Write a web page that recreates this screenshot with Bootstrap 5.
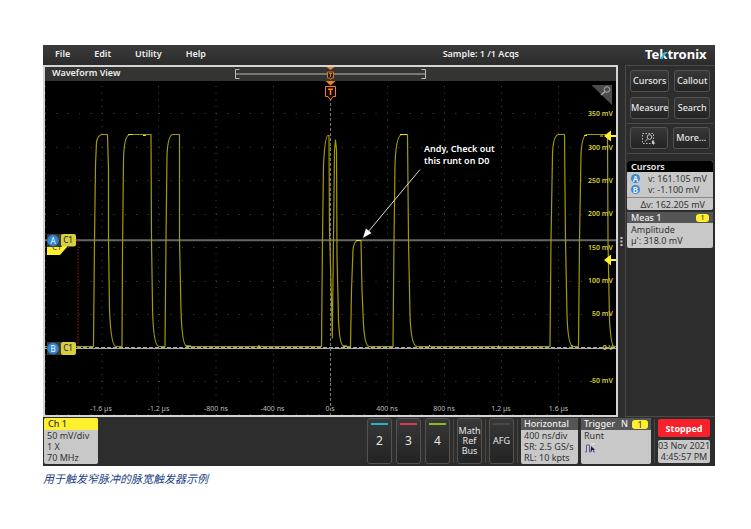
<!DOCTYPE html>
<html lang="zh-CN">
<head>
<meta charset="utf-8">
<meta name="viewport" content="width=device-width, initial-scale=1">
<title>Waveform View</title>
<link href="https://cdn.jsdelivr.net/npm/bootstrap@5.3.0/dist/css/bootstrap.min.css" rel="stylesheet">
<style>
body{font-family:"Noto Sans","Open Sans",sans-serif;font-size:9px;line-height:11px;background:#fff;padding:45px 36px 24px 43px}
.scope{background:#2d2d2d;color:#eee}
.menubar{height:20px;padding:0 8px 4px 12px;background:linear-gradient(#3a3a3a,#2b2b2b)}
.menubar a,.menubar span{color:#eee;font-weight:600;text-decoration:none}
.menu-links{gap:24px}
.menubar .acq{margin-right:125px}
.frame{border:2px solid #d4d4d4;background:#000;min-width:0}
.view-title{display:grid;grid-template-columns:1fr auto 1fr;height:14px;background:#343432;padding-left:7px;padding-right:7px}
.view-title h1{font-size:9px;line-height:12px;font-weight:600;margin:0}
.plot{display:block;width:100%;height:auto}
.plot text{font-family:"Noto Sans","Open Sans",sans-serif}
.grip{width:7px}
.side{width:90px;border:1px solid #4b4b4b;border-right:0;padding:4px 2px 0 1px}
.keys{display:grid;grid-template-columns:1fr 1fr;gap:5px;padding:0 3px 4px;border-bottom:1px solid #4b4b4b}
.keys+.keys{padding-top:3px}
.key{height:22px;padding:0;font-size:9px;line-height:10px;color:#e6e6e6;background:linear-gradient(#383838,#232323);border:1px solid #555250;border-radius:3px;white-space:nowrap;display:flex;align-items:center;justify-content:center}
.side .key{font-weight:500}
.key:hover{color:#fff;border-color:#888}
.tile{background:#c8c8c8;color:#333;border-radius:2px;overflow:hidden;white-space:nowrap}
.tile h2{font-size:9px;line-height:11px;font-weight:500;margin:0;padding:0 4px;color:#eee;background:#555}
.tile h2.dark{background:#000;font-weight:600}
.tile h2.ch{background:#fff02f;color:#333}
.tag{background:#fff02f;color:#444;border-radius:3px;font-size:7px;line-height:8px;width:13px;text-align:center}
.tile-t .tag{width:16px;font-size:8px;line-height:9px}
.values{padding:1px 4px 2px}
.knob{width:9px;height:9px;border-radius:5px;background:#3a88d0;color:#fff;font-size:8px;line-height:9px;text-align:center;font-weight:600;flex-shrink:0}
.readouts{margin-top:7px;gap:2px}
.delta{border-top:1px solid #888;padding:1px 8px 0 0;height:13px}
.dock{height:49px;padding:1px 5px 2px 1px}
.dock .key{height:46px;width:25px;flex-direction:column;position:relative;flex-shrink:0}
.digits{gap:4px}
.stripe{position:absolute;top:4px;left:3px;right:3px;height:2px}
.dock .digit{font-size:12px}
.rule{width:1px;height:44px;background:#4b4843;margin:0 3px}
.tile-ch,.tile-h,.tile-t{height:46px;flex-shrink:0}
.tile-ch{width:54px}.tile-h{width:57px}.tile-t{width:70px;margin-left:3px}
.tile-ch p,.tile-h p,.tile-t p{margin:0;padding:0 3px;line-height:11px}
.tile-ch h2,.tile-h h2,.tile-t h2{line-height:12px}
.tile-h h2,.tile-t h2{padding:0 3px}
.clock{width:52px;gap:3px}
.stop{height:18px;padding:0;border:0;border-radius:2px;background:#f8202a;color:#fff;font-size:9px;line-height:11px;font-weight:700}
.clock .tile{height:23px;text-align:center}
.clock .tile div{margin:0 -2px}
.note{color:#1b3f86;font-family:"Noto Sans CJK SC",sans-serif;font-style:italic;font-size:11px;line-height:16px;margin:4px 0 0}
</style>
<script src="https://cdn.jsdelivr.net/npm/bootstrap@5.3.0/dist/js/bootstrap.bundle.min.js"></script>
</head>
<body>
<main>
<div class="scope">
  <header class="menubar d-flex align-items-center">
    <nav class="menu-links d-flex" aria-label="Main">
      <a href="#">File</a><a href="#">Edit</a><a href="#">Utility</a><a href="#">Help</a>
    </nav>
    <span class="acq ms-auto">Sample: 1 /1 Acqs</span>
    <svg width="63" height="18" viewBox="0 0 63 18" role="img" aria-label="Tektronix">
      <text x="1" y="15" font-family="Noto Sans,Open Sans,sans-serif" font-size="13" font-weight="700" fill="#fff">Tektronix</text>
      <path d="M16 15L20.500 8H23L18.500 15Z" fill="#20b4e0"/>
    </svg>
  </header>

  <div class="d-flex">
    <section class="frame flex-grow-1">
      <div class="view-title">
        <h1>Waveform View</h1>
        <svg width="191" height="14" viewBox="235 67 191 14" aria-hidden="true">
          <path d="M236 74H425" stroke="#777" stroke-width="2"/>
          <path d="M239.500 69.500H235.500V78.500H239.500M421.500 69.500H425.500V78.500H421.500" fill="none" stroke="#bbb"/>
          <path d="M326.500 67H334.500L330.500 70Z" fill="#f5811f"/>
          <path d="M327.500 72H333.500V78H331.500L330.500 79.500L329.500 78H327.500Z" fill="#222" stroke="#d8741d"/>
          <path d="M329 73.500H332M330.500 73.500V77" stroke="#d8741d"/>
        </svg>
      </div>
      <svg class="plot" viewBox="45 81 571 334" role="img" aria-label="Channel 1 waveform">
        <g stroke="#4a4a4a" stroke-dasharray="1 10.400" stroke-dashoffset="-.5">
          <path d="M44.500 113.500H603M44.500 147.500H603M44.500 180.500H603M44.500 214.500H603M44.500 247.500H603M44.500 281.500H603M44.500 314.500H603M44.500 381.500H603M44.500 414.500H603"/>
        </g>
        <g stroke="#484848" stroke-dasharray="1 5.700">
          <path d="M45.500 86V415M102 86V405M158.500 86V405M216 86V405M273.500 86V405M387.500 86V405M444.500 86V405M501.500 86V405M558.500 86V405"/>
        </g>
        <path d="M45 240.300H616" stroke="#666" stroke-width="2"/>
        <path d="M45 348.500H616" stroke="#aaa" stroke-width="1"/>
        <path d="M78 240V346" stroke="#7a1010" stroke-dasharray="2 1"/>
        <path d="M330.500 98V415" stroke="#777" stroke-dasharray="3 2"/>
        <path fill="none" stroke="#a39b06" stroke-width="1.200" stroke-linejoin="round" d="M45 346.500H93.500L94.500 240L95.500 165L96.500 142Q98 135 102 134.500H107.500L108.500 170V240L109.500 310Q111 346 116 346.500H122L122.500 250L123.500 160Q124 134.500 130 134.500H151L151.500 240L152.500 305Q153 346 159 346.500H165L166 240L167 155Q168 134.500 173 134.500H179.500V240L181 310Q182 346 187 346.500H321.500L322.500 240L323.500 165Q325 135.500 328 135.500H329L329.500 230L331.500 300L332.300 338L333.500 240L334.500 150L335.500 140L336.500 150L337 255L338.500 320Q339.500 346 344 346.500H350.500L351.500 290L353 250Q354 240.500 358 240.500H361L362 290L363.500 325Q365 346 369 346.500H393L394 240L395 165Q396 134.500 402 134.500H407.500L408.500 240L410 315Q411 346 417 346.500H550L551 240L552.500 155Q553 134.500 559 134.500H564.500L565.500 240L567 315Q568 346 573 346.500H578.500L579.500 240L581 155Q582 134.500 587 134.500H607.500L608 240L609.500 320Q611 346 614 346.500H616"/>
        <path d="M128 134.500H133M143 135.500H146M400 134.500H407M584 135.500H587M600 136H603M356 240.500H361M186 346H191M343 346H347M258 346H260M429 345.500H430M498 346H499M571 346H573" stroke="#e8dd18"/>
        <path d="M77 347.500H616" stroke="#aaa" stroke-dasharray="4 2"/>

        <g fill="#f5811f">
          <path d="M325.500 81H335.500L330.500 85.500Z"/>
          <path d="M325.500 86.500H335.500V96.500H333L330.500 100L328 96.500H325.500Z" fill="#120800" stroke="#f5811f"/>
          <path d="M328 88.500H333V90H331.300V95H329.700V90H328Z"/>
        </g>
        <path d="M591.500 85H612V105Z" fill="#4c4c4c"/>
        <g fill="none" stroke="#aaa"><circle cx="607" cy="89.500" r="2.800"/><path d="M605 91.500L601 95" stroke-width="1.500"/></g>

        <g fill="#d8d033" font-size="7" font-weight="600" text-anchor="end">
          <text x="613" y="116">350 mV</text><text x="613" y="150">300 mV</text><text x="613" y="183">250 mV</text><text x="613" y="216">200 mV</text><text x="613" y="250">150 mV</text><text x="613" y="283">100 mV</text><text x="613" y="316">50 mV</text><text x="613" y="350">0 V</text><text x="613" y="383">-50 mV</text>
        </g>
        <g fill="#bbb" font-size="7" text-anchor="middle">
          <text x="101" y="411">-1.6 µs</text><text x="158.500" y="411">-1.2 µs</text><text x="216" y="411">-800 ns</text><text x="272.500" y="411">-400 ns</text><text x="330" y="411">0 s</text><text x="387" y="411">400 ns</text><text x="444" y="411">800 ns</text><text x="501" y="411">1.2 µs</text><text x="558.500" y="411">1.6 µs</text>
        </g>
        <g fill="#fff02f"><path d="M604 136L611 130.500V135H616V137H611V141.500Z"/><path d="M604 260L611 254.500V259H616V261H611V265.500Z"/></g>

        <path d="M420 169.500L368 232" stroke="#ddd"/>
        <path d="M363 238L366 228.500L371.500 233Z" fill="#fff"/>
        <g fill="#fff" font-size="9" font-weight="600"><text x="424" y="152">Andy, Check out</text><text x="424" y="164">this runt on D0</text></g>

        <path d="M47 243H67V247L60 255H47Z" fill="#fff02f"/>
        <text x="52" y="250" font-size="8" fill="#333">C1</text>
        <rect x="47" y="234" width="15" height="13" fill="#3b3b38"/>
        <rect x="61" y="234" width="15" height="12.500" rx="2" fill="#d8cf3e"/>
        <rect x="47" y="342" width="15" height="13" fill="#3b3b38"/>
        <rect x="61" y="342" width="15" height="13" rx="2" fill="#d8cf3e"/>
        <circle cx="53" cy="240.500" r="5.800" fill="#2f86cf"/><circle cx="53" cy="348.500" r="5.800" fill="#2f86cf"/>
        <g font-size="8" text-anchor="middle"><text x="53" y="243.500" fill="#fff">A</text><text x="53" y="351.500" fill="#fff">B</text><text x="68" y="242.500" fill="#333" font-weight="500">C1</text><text x="68" y="350.500" fill="#333" font-weight="500">C1</text></g>
      </svg>
    </section>

    <div class="grip d-flex align-items-center justify-content-center" aria-hidden="true">
      <svg width="3" height="9" viewBox="0 0 3 9"><path d="M1.500 0V9" stroke="#ccc" stroke-width="2" stroke-dasharray="2 1.500"/></svg>
    </div>

    <aside class="side flex-shrink-0">
      <div class="keys">
        <button class="btn key" type="button">Cursors</button>
        <button class="btn key" type="button">Callout</button>
        <button class="btn key" type="button">Measure</button>
        <button class="btn key" type="button">Search</button>
      </div>
      <div class="keys">
        <button class="btn key" type="button" aria-label="Zoom area">
          <svg width="14" height="13" viewBox="0 0 14 13" fill="none" stroke="#bbb"><path d="M.5 1.500H11.500V11.500H.5Z" stroke-dasharray="1.500 1.500"/><circle cx="7.500" cy="5" r="2.300"/><path d="M5.800 6.800L3 9.500"/><path d="M10 8L13.500 11.500L12 11.500L12 13L10 11Z" fill="#ccc" stroke="none"/></svg>
        </button>
        <button class="btn key" type="button">More...</button>
      </div>
      <div class="readouts d-flex flex-column">
        <section class="tile">
          <h2 class="dark">Cursors</h2>
          <div class="values">
            <div class="d-flex align-items-center gap-2"><span class="knob">A</span><span>v: 161.105 mV</span></div>
            <div class="d-flex align-items-center gap-2"><span class="knob">B</span><span>v: -1.100 mV</span></div>
          </div>
          <div class="delta text-end">Δv: 162.205 mV</div>
        </section>
        <section class="tile">
          <h2 class="d-flex align-items-center">Meas 1<span class="tag ms-auto">1</span></h2>
          <div class="values">
            <div>Amplitude</div>
            <div>µ': 318.0 mV</div>
          </div>
        </section>
      </div>
    </aside>
  </div>

  <footer class="dock d-flex align-items-center">
    <section class="tile tile-ch me-auto"><h2 class="ch">Ch 1</h2><p>50 mV/div</p><p>1 X</p><p>70 MHz</p></section>
    <div class="digits d-flex">
      <button class="btn key digit" type="button"><span class="stripe" style="background:#1fb6c1"></span>2</button>
      <button class="btn key digit" type="button"><span class="stripe" style="background:#d93a55"></span>3</button>
      <button class="btn key digit" type="button"><span class="stripe" style="background:#8fb92a"></span>4</button>
    </div>
    <span class="rule"></span>
    <button class="btn key" type="button"><span>Math</span><span>Ref</span><span>Bus</span></button>
    <span class="rule"></span>
    <button class="btn key" type="button"><span class="stripe" style="background:#484848"></span>AFG</button>
    <span class="rule"></span>
    <section class="tile tile-h"><h2>Horizontal</h2><p>400 ns/div</p><p>SR: 2.5 GS/s</p><p>RL: 10 kpts</p></section>
    <section class="tile tile-t"><h2 class="d-flex align-items-center">Trigger<span class="ms-auto me-1">N</span><span class="tag">1</span></h2><p>Runt</p>
      <svg class="ms-1" width="11" height="10" viewBox="0 0 11 10" fill="none" aria-hidden="true"><path d="M0 9H1.500V2H4.500V9H6V5.500H8.500V9H10" stroke="#5a5a9a"/><path d="M6 3L10 7H7.500L6 8.500Z" fill="#223"/><path d="M6 1H10" stroke="#eee"/></svg>
    </section>
    <span class="rule"></span>
    <div class="clock d-flex flex-column">
      <button class="btn stop" type="button">Stopped</button>
      <div class="tile"><div>03 Nov 2021</div><div>4:45:57 PM</div></div>
    </div>
  </footer>
</div>
<p class="note">用于触发窄脉冲的脉宽触发器示例</p>
</main>
</body>
</html>
